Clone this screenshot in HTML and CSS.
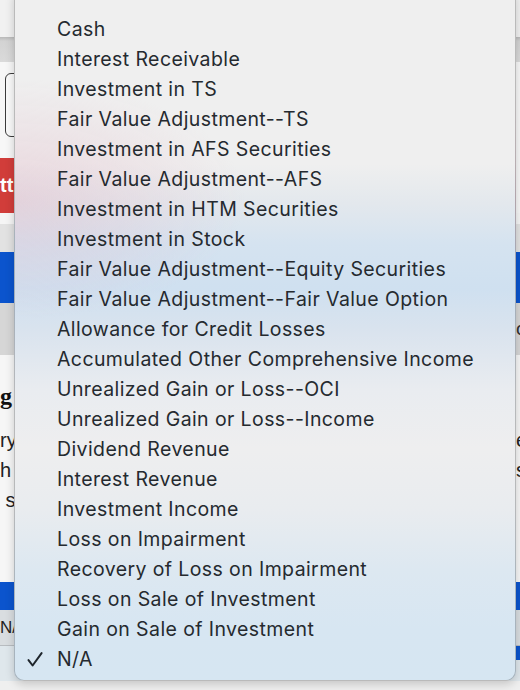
FILE: index.html
```html
<!DOCTYPE html>
<html lang="en">
<head>
<meta charset="utf-8">
<title>Account menu</title>
<link rel="stylesheet" href="styles.css">
</head>
<body>
<div class="page">
  <div class="row r-top"></div>
  <div class="row r-toolbar"></div>
  <div class="row r-form"><div class="input"></div></div>
  <div class="row r-btn"><span class="edge-l btn">tt</span></div>
  <div class="row r-gap"></div>
  <div class="row r-gray"></div>
  <div class="row r-blue"></div>
  <div class="row r-head"><span class="edge-l"></span><span class="edge-r">o</span></div>
  <div class="row r-content">
    <div class="line heading"><span class="edge-l">g</span></div>
    <div class="line"><span class="edge-l">ry</span><span class="edge-r">e</span></div>
    <div class="line"><span class="edge-l">h</span><span class="edge-r">s</span></div>
    <div class="line"><span class="edge-l">&nbsp;s</span></div>
  </div>
  <div class="row r-blue2"></div>
  <div class="row r-cell"><span class="edge-l">N/</span><span class="edge-r"></span></div>
  <div class="row r-cell2"><span class="edge-l"></span><span class="edge-r blue"></span></div>
  <div class="row r-bottom"></div>
</div>

<div class="menu" role="menu">
  <ul class="items">
    <li>Cash</li>
    <li>Interest Receivable</li>
    <li>Investment in TS</li>
    <li>Fair Value Adjustment--TS</li>
    <li>Investment in AFS Securities</li>
    <li>Fair Value Adjustment--AFS</li>
    <li>Investment in HTM Securities</li>
    <li>Investment in Stock</li>
    <li>Fair Value Adjustment--Equity Securities</li>
    <li>Fair Value Adjustment--Fair Value Option</li>
    <li>Allowance for Credit Losses</li>
    <li>Accumulated Other Comprehensive Income</li>
    <li>Unrealized Gain or Loss--OCI</li>
    <li>Unrealized Gain or Loss--Income</li>
    <li>Dividend Revenue</li>
    <li>Interest Revenue</li>
    <li>Investment Income</li>
    <li>Loss on Impairment</li>
    <li>Recovery of Loss on Impairment</li>
    <li>Loss on Sale of Investment</li>
    <li>Gain on Sale of Investment</li>
    <li class="checked"><svg class="check" viewBox="0 0 16 16" width="16" height="16"><path d="M1.5 8.6 L5.6 14 L14.6 1.6" fill="none" stroke="currentColor" stroke-width="2" stroke-linecap="round" stroke-linejoin="round"/></svg>N/A</li>
  </ul>
</div>
</body>
</html>
```
FILE: styles.css
```css
html, body {
  margin: 0;
  padding: 0;
  width: 520px;
  height: 690px;
  overflow: hidden;
  background: #efefef;
  font-family: "Liberation Sans", Arial, sans-serif;
}

.page {
  display: flex;
  flex-direction: column;
  width: 520px;
}

.row {
  display: flex;
  justify-content: space-between;
  align-items: center;
  flex: none;
}

.edge-l {
  width: 14px;
  overflow: hidden;
  white-space: nowrap;
}

.edge-r {
  width: 4px;
  overflow: hidden;
  white-space: nowrap;
}

.r-top { height: 37px; background: #f1f1f1; }
.r-toolbar { height: 25px; background: linear-gradient(#b9b9b9 0, #d3d3d3 4px, #dadada 100%); }
.r-form { height: 96px; background: #f7f7f7; align-items: flex-start; padding-top: 11px; box-sizing: border-box; justify-content: flex-start; }
.input {
  margin-left: 5px;
  width: 200px;
  height: 62px;
  border: 1px solid #3c3c3c;
  border-radius: 6px;
  background: #fafafa;
}
.r-btn { height: 55px; background: #f7f7f7; justify-content: flex-start; }
.btn {
  height: 55px;
  background: #d13d3a;
  color: #fff;
  font-weight: bold;
  font-size: 20px;
  line-height: 55px;
}
.r-gap { height: 11px; background: #f5f5f5; }
.r-gray { height: 28px; background: #e2e2e2; }
.r-blue { height: 51px; background: #0b54cd; }
.r-head { height: 52px; background: #d6d6d6; font-size: 19px; color: #333; }
.r-content {
  height: 227px;
  background: #f6f6f6;
  display: flex;
  flex-direction: column;
  align-items: stretch;
  justify-content: flex-start;
  padding-top: 26px;
  box-sizing: border-box;
  font-size: 20px;
  color: #222;
}
.line {
  display: flex;
  justify-content: space-between;
  height: 30px;
  line-height: 30px;
}
.heading {
  font-family: "Liberation Serif", "Times New Roman", serif;
  font-weight: bold;
  font-size: 24px;
  height: 44px;
  line-height: 30px;
  color: #111;
}
.r-blue2 { height: 28px; background: #0b54cd; }
.r-cell { height: 36px; background: #d9dde0; font-size: 17px; color: #222; border-bottom: 1px solid #b8bcc0; box-sizing: border-box; }
.r-cell2 { height: 35px; background: #dfe7ec; align-items: flex-start; }
.r-cell2 .blue { height: 14px; background: #0b54cd; }
.r-bottom { height: 30px; background: #efefef; }

.menu {
  position: absolute;
  left: 14px;
  top: -12px;
  width: 502px;
  height: 693px;
  box-sizing: border-box;
  border: 1px solid rgba(0, 0, 0, 0.22);
  border-radius: 10px;
  box-shadow: 0 3px 10px rgba(0, 0, 0, 0.18);
  background:
    radial-gradient(ellipse 230px 120px at 0px 210px, rgba(226, 180, 196, 0.42), rgba(226, 180, 196, 0) 100%),
    linear-gradient(to bottom,
      #efefef 0,
      #efefef 175px,
      #e3e8ed 215px,
      #d5e3f0 255px,
      #cfe0f0 300px,
      #d9e3ee 340px,
      #e9ecf0 400px,
      #eeeeef 460px,
      #e9ecef 520px,
      #dde8f1 580px,
      #d7e6f2 640px,
      #d6e6f2 693px);
}

.items {
  list-style: none;
  margin: 0;
  padding: 25px 0 0 42px;
  font-family: Inter, "Noto Sans", sans-serif;
  font-size: 19.5px;
  letter-spacing: 0.4px;
  color: #252a2f;
}

.items li {
  height: 30px;
  line-height: 30px;
  white-space: nowrap;
  position: relative;
}

.check {
  position: absolute;
  left: -30px;
  top: 7px;
  width: 16px;
  height: 17px;
  color: #1f262c;
}
```
